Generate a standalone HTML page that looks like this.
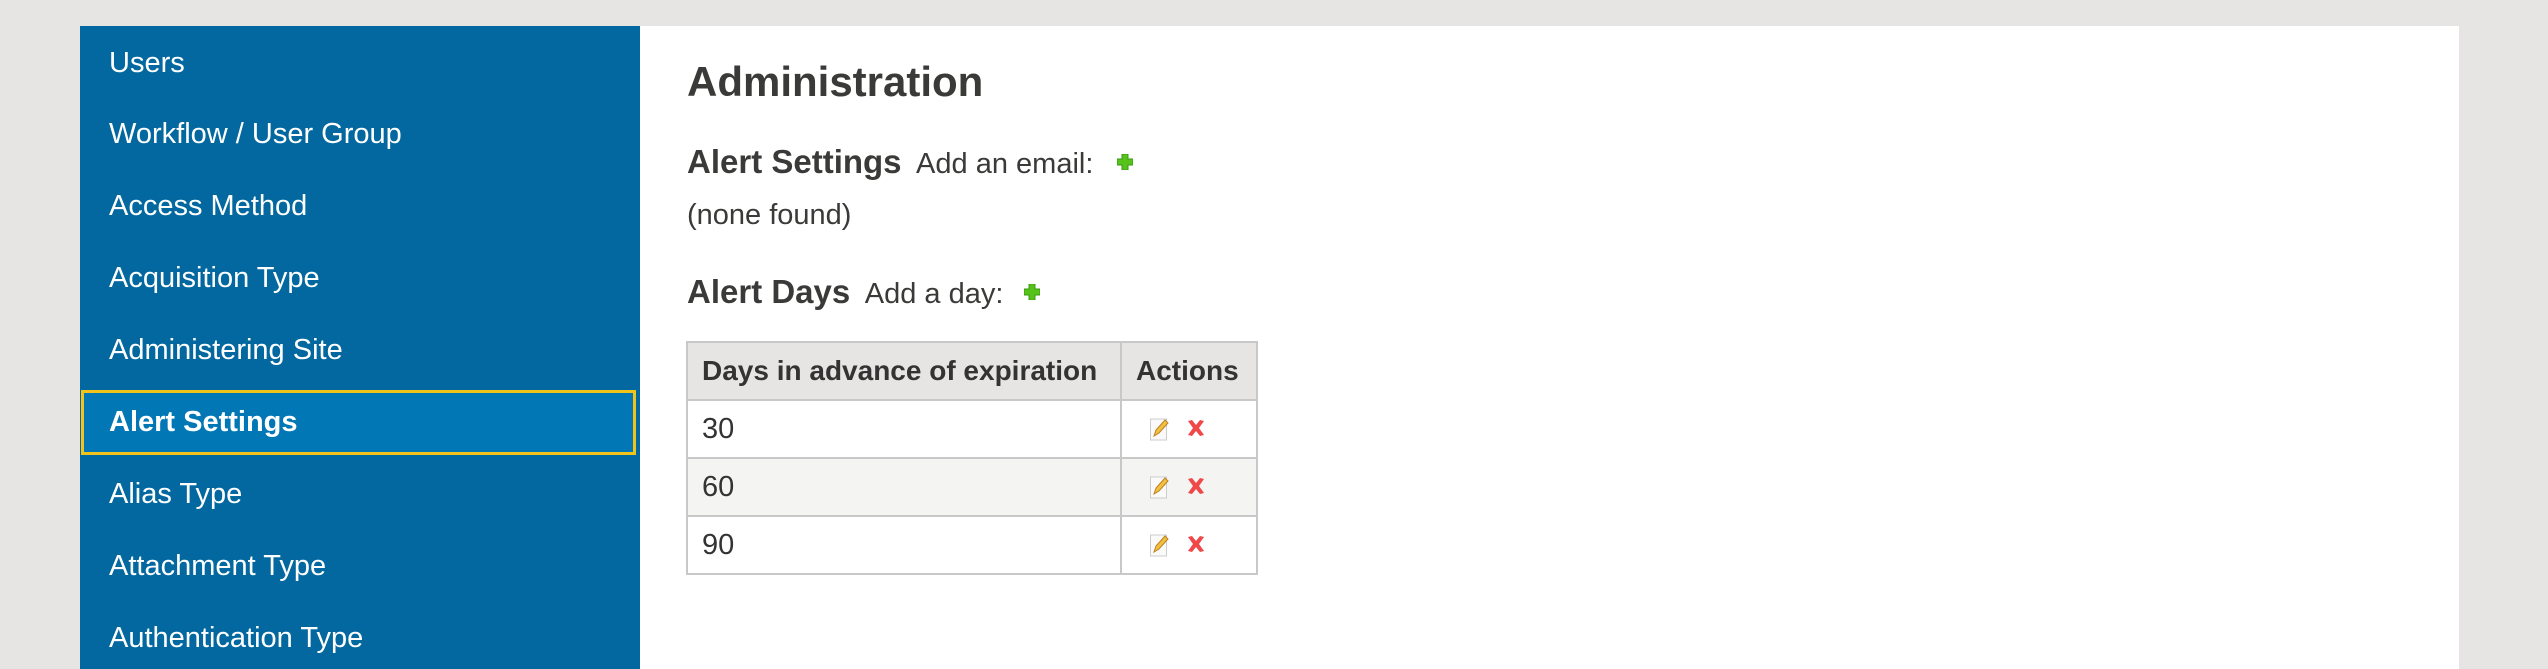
<!DOCTYPE html>
<html><head><style>
body{margin:0;width:2548px;height:669px;background:#e6e5e3;font-family:"Liberation Sans",Arial,sans-serif;overflow:hidden;position:relative}
.side{position:absolute;left:80px;top:26px;width:560px;height:643px;background:#02689f}
.side .i{position:absolute;left:29px;color:#fff;font-size:29px;line-height:40px}
.side .sel{position:absolute;left:1px;top:364px;width:555px;height:65px;border:3px solid #f2c41b;background:#0177b6;box-sizing:border-box}
.main{position:absolute;left:640px;top:26px;width:1819px;height:643px;background:#fff;color:#3a3a38}
.t{position:absolute;white-space:nowrap}
table{position:absolute;left:686px;top:341px;border-collapse:collapse;font-size:29px;color:#333;table-layout:fixed;width:570px}
td,th{border:2px solid #c8c8c8;height:55px;padding:0 14px;text-align:left;white-space:nowrap;overflow:hidden;box-sizing:border-box}
th{background:#e6e5e3;font-weight:bold;font-size:28px}
tr.s td{background:#f4f4f2}
</style></head><body>
<div class="side">
<div class="i" style="top:17px">Users</div>
<div class="i" style="top:88px">Workflow / User Group</div>
<div class="i" style="top:160px">Access Method</div>
<div class="i" style="top:232px">Acquisition Type</div>
<div class="i" style="top:304px">Administering Site</div>
<div class="sel"></div>
<div class="i" style="top:376px;font-weight:bold">Alert Settings</div>
<div class="i" style="top:448px">Alias Type</div>
<div class="i" style="top:520px">Attachment Type</div>
<div class="i" style="top:592px">Authentication Type</div>
</div>
<div class="main"></div>
<div class="t" style="left:687px;top:58px;font-size:42px;font-weight:bold;color:#3a3a38">Administration</div>
<div class="t" style="left:687px;top:143px;font-size:33px;color:#3a3a38"><b>Alert Settings</b><span style="font-size:29px">&nbsp; Add an email:</span></div>
<div class="t" style="left:687px;top:199px;font-size:29px;color:#3a3a38">(none found)</div>
<div class="t" style="left:687px;top:273px;font-size:33px;color:#3a3a38"><b>Alert Days</b><span style="font-size:29px">&nbsp; Add a day:</span></div>
<svg style="position:absolute;left:1117px;top:154px" width="16" height="16"><path d="M5 0h6v5h5v6h-5v5H5v-5H0V5h5z" fill="#56c21a" stroke="#3a9a10" stroke-width="1"/></svg>
<svg style="position:absolute;left:1024px;top:284px" width="16" height="16"><path d="M5 0h6v5h5v6h-5v5H5v-5H0V5h5z" fill="#56c21a" stroke="#3a9a10" stroke-width="1"/></svg>
<table>
<colgroup><col style="width:434px"><col style="width:136px"></colgroup>
<tr><th style="height:58px">Days in advance of expiration</th><th>Actions</th></tr>
<tr><td style="height:58px">30</td><td></td></tr>
<tr class="s"><td style="height:58px">60</td><td></td></tr>
<tr><td style="height:58px">90</td><td></td></tr>
</table>
<svg style="position:absolute;left:1150px;top:417px" width="60" height="140">
<g id="r">
<rect x="0.5" y="2" width="16" height="21" fill="#fafafa" stroke="#ccc"/>
<path d="M4 19l2-6 9-10 3 3-9 10z" fill="#f0c040" stroke="#c08020"/>
<path d="M38 4l4-1 4 5 4-5 4 1-5 7 5 7-4 1-4-5-4 5-4-1 5-7z" fill="#f04848"/>
</g>
<use href="#r" y="58"/><use href="#r" y="116"/>
</svg>
</body></html>
